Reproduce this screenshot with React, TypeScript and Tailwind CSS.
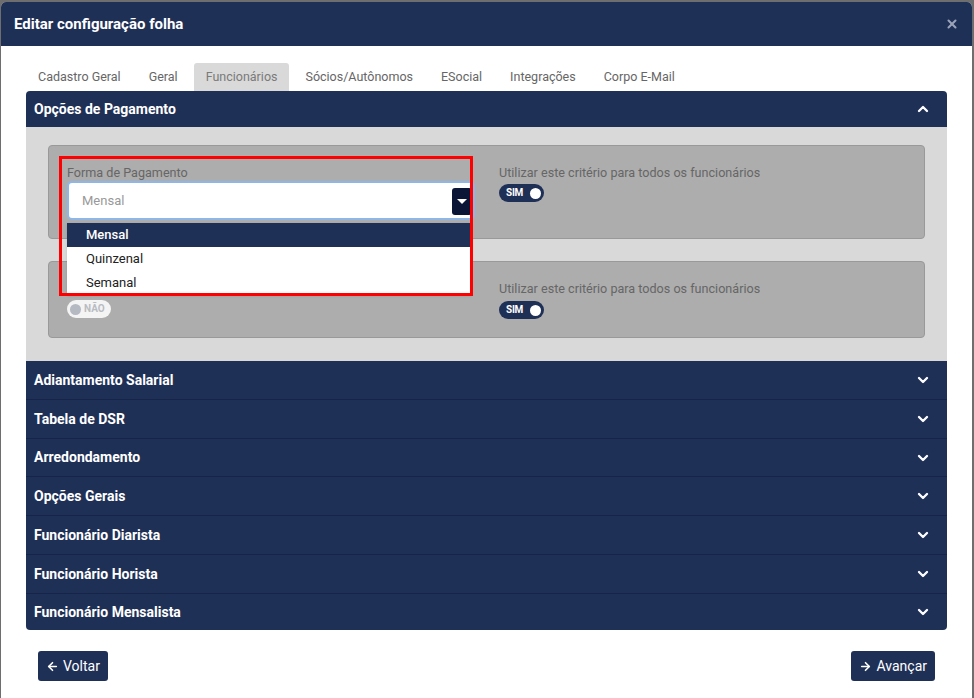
import { ChevronDown, ChevronUp, ArrowLeft, ArrowRight, X } from 'lucide-react'

const tabs = ['Cadastro Geral', 'Geral', 'Funcionários', 'Sócios/Autônomos', 'ESocial', 'Integrações', 'Corpo E-Mail']
const sections: [string, string][] = [
  ['Adiantamento Salarial', 'h-[38px]'],
  ['Tabela de DSR', 'h-[39px]'],
  ['Arredondamento', 'h-[38px]'],
  ['Opções Gerais', 'h-[39px]'],
  ['Funcionário Diarista', 'h-[39px]'],
  ['Funcionário Horista', 'h-[39px]'],
  ['Funcionário Mensalista', 'h-[37px]'],
]

function ToggleSim() {
  return (
    <div className="flex items-center justify-between w-[45px] h-[18px] rounded-full bg-[#1f3057] pl-[7px] pr-[3px]">
      <span className="text-[10px] font-bold text-white tracking-tight leading-none">SIM</span>
      <span className="w-[11px] h-[11px] rounded-full bg-white" />
    </div>
  )
}

function ToggleNao() {
  return (
    <div className="flex items-center gap-[3px] w-[44px] h-[18px] rounded-full bg-[#f4f4f4] pl-[3px]">
      <span className="w-[11px] h-[11px] rounded-full bg-[#b4b9c2]" />
      <span className="text-[10px] font-bold text-[#b9bcc2] leading-none">NÃO</span>
    </div>
  )
}

export default function App() {
  return (
    <div className="w-[974px] h-[698px] overflow-hidden bg-[#6e6e6e] pt-[2px] pl-[1px]" style={{ fontFamily: 'Roboto, "Liberation Sans", sans-serif' }}>
      <div className="w-[971px] h-[696px] bg-white rounded-t-[5px] overflow-hidden">
        {/* header */}
        <div className="h-[44px] bg-[#1f3057] flex items-center justify-between pl-[13px] pr-[13px]">
          <h1 className="text-white font-bold text-[15px]">Editar configuração folha</h1>
          <X size={14} strokeWidth={3.5} className="text-[#9aa3b8]" />
        </div>

        <div className="px-[25px]">
          {/* tabs */}
          <div className="flex mt-[17px] h-[28px]">
            {tabs.map(t => (
              <div key={t}
                className={`px-[12px] mr-[4px] flex items-center text-[12.5px] rounded-t-[3px] ${t === 'Funcionários' ? 'bg-[#d9d9d9] text-[#7a7a7a]' : 'text-[#666]'}`}>
                {t}
              </div>
            ))}
          </div>

          {/* accordion */}
          <div className="rounded-[4px]">
            <div className="h-[36px] bg-[#1f3057] rounded-t-[4px] flex items-center justify-between pl-[8px] pr-[16px]">
              <span className="text-white font-bold text-[14px]">Opções de Pagamento</span>
              <ChevronUp size={16} strokeWidth={3.5} className="text-white" />
            </div>

            <div className="bg-[#d9d9d9] px-[22px] pt-[18px] pb-[23px] flex flex-col gap-[22px]">
              {/* card 1 */}
              <div className="relative bg-[#adadad] border border-[#999] rounded-[4px] h-[94px] flex px-[18px] pt-[20px]">
                <div className="w-[408px]">
                  <div className="text-[12.6px] text-[#666] leading-[14px]">Forma de Pagamento</div>
                  <div className="relative mt-[1px] h-[39px] bg-white border-2 border-[#8eb6e6] rounded-[5px] flex items-center pl-[13px]">
                    <span className="text-[13px] text-[#999]">Mensal</span>
                    <div className="absolute right-[1px] top-[5px] w-[20px] h-[27px] bg-[#0b1536] rounded-[3px] flex items-center justify-center">
                      <div className="w-0 h-0 border-l-[5px] border-r-[5px] border-t-[5px] border-l-transparent border-r-transparent border-t-white" />
                    </div>
                  </div>
                </div>
                <div className="ml-[24px]">
                  <div className="text-[12.6px] text-[#666] leading-[14px]">Utilizar este critério para todos os funcionários</div>
                  <div className="mt-[4px]"><ToggleSim /></div>
                </div>

                {/* open dropdown */}
                <div className="absolute left-[18px] top-[77px] w-[404px] bg-white z-10 shadow">
                  <div className="h-[24px] bg-[#1f3057] text-white text-[13px] font-medium flex items-center pl-[19px]">Mensal</div>
                  <div className="h-[24px] text-[#222] text-[13px] flex items-center pl-[19px]">Quinzenal</div>
                  <div className="h-[24px] text-[#222] text-[13px] flex items-center pl-[19px]">Semanal</div>
                </div>

                {/* highlight */}
                <div className="absolute left-[10px] top-[10px] w-[414px] h-[140px] border-[3px] border-[#ff0000] z-20 pointer-events-none" />
              </div>

              {/* card 2 */}
              <div className="bg-[#adadad] border border-[#999] rounded-[4px] h-[77px] flex px-[18px] pt-[20px]">
                <div className="w-[408px]">
                  <div className="h-[14px]" />
                  <div className="mt-[4px]"><ToggleNao /></div>
                </div>
                <div className="ml-[24px]">
                  <div className="text-[12.6px] text-[#666] leading-[14px]">Utilizar este critério para todos os funcionários</div>
                  <div className="mt-[5px]"><ToggleSim /></div>
                </div>
              </div>
            </div>

            {sections.map(([s, h], i) => (
              <div key={s}
                className={`${h} bg-[#1f3057] flex items-center justify-between pl-[8px] pr-[16px] ${i > 0 ? 'border-t border-[#17244a]' : ''} ${i === sections.length - 1 ? 'rounded-b-[4px]' : ''}`}>
                <span className="text-white font-bold text-[14px]">{s}</span>
                <ChevronDown size={16} strokeWidth={3.5} className="text-white" />
              </div>
            ))}
          </div>

          {/* footer */}
          <div className="flex justify-between mt-[21px] px-[12px]">
            <button className="h-[30px] px-[8px] bg-[#1f3057] text-white text-[14px] rounded-[3px] flex items-center gap-[4px]">
              <ArrowLeft size={13} strokeWidth={3} /> Voltar
            </button>
            <button className="h-[30px] px-[8px] bg-[#1f3057] text-white text-[14px] rounded-[3px] flex items-center gap-[4px]">
              <ArrowRight size={13} strokeWidth={3} /> Avançar
            </button>
          </div>
        </div>
      </div>
    </div>
  )
}
